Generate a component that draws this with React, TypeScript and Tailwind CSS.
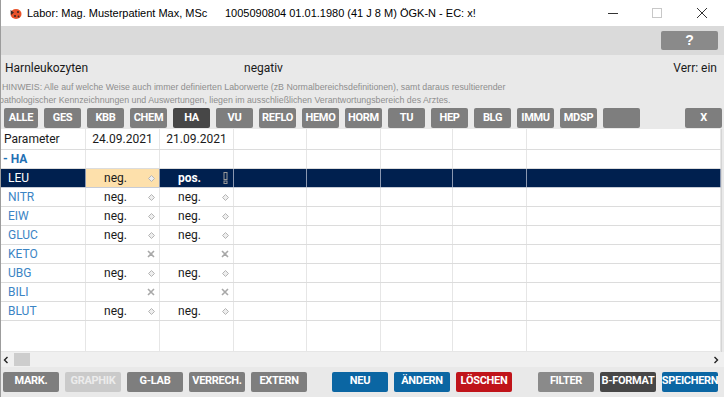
import React from 'react';

const tabs = ['GES', 'KBB', 'CHEM', 'HA', 'VU', 'REFLO', 'HEMO', 'HORM', 'TU', 'HEP', 'BLG', 'IMMU', 'MDSP', ''];

type Mark = 'd' | 'x' | '!';
type Row = { name: string; a?: string; am: Mark; b?: string; bm: Mark; sel?: boolean };

const rows: Row[] = [
  { name: 'LEU', a: 'neg.', am: 'd', b: 'pos.', bm: '!', sel: true },
  { name: 'NITR', a: 'neg.', am: 'd', b: 'neg.', bm: 'd' },
  { name: 'EIW', a: 'neg.', am: 'd', b: 'neg.', bm: 'd' },
  { name: 'GLUC', a: 'neg.', am: 'd', b: 'neg.', bm: 'd' },
  { name: 'KETO', am: 'x', bm: 'x' },
  { name: 'UBG', a: 'neg.', am: 'd', b: 'neg.', bm: 'd' },
  { name: 'BILI', am: 'x', bm: 'x' },
  { name: 'BLUT', a: 'neg.', am: 'd', b: 'neg.', bm: 'd' },
];

const Marker = ({ kind }: { kind: Mark }) => {
  if (kind === 'd')
    return (
      <svg width="7" height="7" viewBox="0 0 7 7" className="absolute right-[4px] top-[6px]">
        <path d="M3.5 0.5 L6.5 3.5 L3.5 6.5 L0.5 3.5 Z" fill="#eeeeee" stroke="#b5b5b5" strokeWidth="1" />
      </svg>
    );
  if (kind === 'x')
    return (
      <svg width="8" height="8" viewBox="0 0 8 8" className="absolute right-[4px] top-[5px]">
        <path d="M1 1 L7 7 M7 1 L1 7" stroke="#a8a8a8" strokeWidth="1.6" />
      </svg>
    );
  return (
    <svg width="5" height="12" viewBox="0 0 5 12" className="absolute right-[5px] top-[3px]">
      <rect x="1" y="0.5" width="3" height="7" fill="none" stroke="#9a9a9a" />
      <rect x="1" y="9" width="3" height="2.5" fill="none" stroke="#9a9a9a" />
    </svg>
  );
};

const emptyCols = ['w-[73px]', 'w-[74px]', 'w-[72px]', 'w-[74px]'];

const EmptyCells = ({ sel }: { sel?: boolean }) => (
  <>
    {emptyCols.map((w, i) => (
      <div key={i} className={`${w} h-full border-r ${sel ? 'border-[#8a97b0]' : 'border-[#e6e6e6]'}`} />
    ))}
    <div className={`flex-1 h-full border-r ${sel ? 'border-[#8a97b0]' : 'border-[#e6e6e6]'}`} />
  </>
);

export default function App() {
  return (
    <div className="w-[724px] h-[397px] overflow-hidden bg-[#e9e9e9] flex flex-col border-l border-[#9c9c9c] font-['Roboto',sans-serif] text-[12px] text-[#1a1a1a]">
      {/* title bar */}
      <div className="h-[26px] bg-white flex items-center font-['Liberation_Sans',sans-serif] text-[11px] text-black whitespace-nowrap shrink-0">
        <svg width="14" height="13" viewBox="0 0 14 13" className="ml-[7px] mr-[5px] shrink-0">
          <ellipse cx="8" cy="7" rx="5.5" ry="5" fill="#e8522a" />
          <path d="M2.5 3 L6 5.5 L3 8 Z" fill="#3a2a26" />
          <circle cx="7" cy="9" r="1.1" fill="#3a2a26" />
          <circle cx="10" cy="5" r="1.1" fill="#3a2a26" />
          <circle cx="10.5" cy="9.5" r="0.9" fill="#3a2a26" />
        </svg>
        <span className="w-[198px] shrink-0">Labor: Mag. Musterpatient Max, MSc</span>
        <span className="w-[175px] shrink-0">1005090804 01.01.1980 (41 J 8 M)</span>
        <span>ÖGK-N - EC: x!</span>
        <div className="ml-auto flex items-center">
          <svg width="12" height="12" viewBox="0 0 12 12" className="mr-[32px]">
            <path d="M1 6.5 H11" stroke="#333" strokeWidth="1" />
          </svg>
          <svg width="12" height="12" viewBox="0 0 12 12" className="mr-[33px]">
            <rect x="1.5" y="1.5" width="9" height="9" fill="none" stroke="#c8c8c8" />
          </svg>
          <svg width="12" height="12" viewBox="0 0 12 12" className="mr-[16px]">
            <path d="M1 1 L11 11 M11 1 L1 11" stroke="#333" strokeWidth="1" />
          </svg>
        </div>
      </div>

      {/* toolbar */}
      <div className="h-[29px] bg-[#dadada] flex items-center justify-end pr-[6px] shrink-0">
        <div className="w-[57px] h-[19px] rounded-[2px] bg-[#8a8a8a] flex items-center justify-center text-white font-bold text-[14px] font-['Liberation_Sans',sans-serif]">
          ?
        </div>
      </div>

      {/* info */}
      <div className="h-[25px] flex items-center px-[4px] shrink-0 text-[12px]">
        <span className="w-[239px]">Harnleukozyten</span>
        <span>negativ</span>
        <span className="ml-auto mr-[3px]">Verr: ein</span>
      </div>
      <div className="h-[28px] font-['Liberation_Sans',sans-serif] text-[8.8px] leading-[12.5px] text-[#8e8e8e] whitespace-nowrap shrink-0 pt-[1px]">
        <div className="ml-[1px]">
          HINWEIS: Alle auf welche Weise auch immer definierten Laborwerte (zB Normalbereichsdefinitionen), samt daraus resultierender
        </div>
        <div className="-ml-[2px]">
          pathologischer Kennzeichnungen und Auswertungen, liegen im ausschließlichen Verantwortungsbereich des Arztes.
        </div>
      </div>

      {/* tabs */}
      <div className="h-[21px] flex items-start gap-[6px] pl-[3px] pr-[2px] shrink-0 text-white font-bold text-[11px] tracking-[-0.3px]">
        <div className="w-[34px] h-[20px] rounded-[2px] bg-[#7e7e7e] flex items-center justify-center">ALLE</div>
        {tabs.map((t, i) => (
          <div
            key={i}
            className={`w-[37px] h-[20px] rounded-[2px] flex items-center justify-center ${t === 'HA' ? 'bg-[#474747]' : 'bg-[#7e7e7e]'}`}
          >
            {t}
          </div>
        ))}
        <div className="ml-auto w-[37px] h-[20px] rounded-[2px] bg-[#7e7e7e] flex items-center justify-center">X</div>
      </div>

      {/* table */}
      <div className="flex-1 bg-white flex flex-col mr-[2px] border-r border-[#d4d4d4]">
        <div className="h-[21px] flex items-center border-b border-[#dcdcdc] shrink-0">
          <div className="w-[85px] h-full flex items-center pl-[3px] border-r border-[#e6e6e6]">Parameter</div>
          <div className="w-[74px] h-full flex items-center justify-center border-r border-[#e6e6e6]">24.09.2021</div>
          <div className="w-[74px] h-full flex items-center justify-center border-r border-[#e6e6e6]">21.09.2021</div>
          <EmptyCells />
        </div>
        <div className="h-[19px] flex items-center border-b border-[#dcdcdc] shrink-0">
          <div className="w-[85px] h-full flex items-center pl-[2px] border-r border-[#e6e6e6] font-bold text-[#1f70b4]">- HA</div>
          <div className="w-[74px] h-full border-r border-[#e6e6e6]" />
          <div className="w-[74px] h-full border-r border-[#e6e6e6]" />
          <EmptyCells />
        </div>
        {rows.map((r) => (
          <div
            key={r.name}
            className={`h-[19px] flex items-center border-b shrink-0 ${r.sel ? 'bg-[#00204f] border-[#c7ccd6] text-white' : 'border-[#dcdcdc]'}`}
          >
            <div className={`w-[85px] h-full flex items-center pl-[7px] border-r ${r.sel ? 'border-[#8a97b0] text-white' : 'border-[#e6e6e6] text-[#3b84c4]'}`}>
              {r.name}
            </div>
            <div className={`relative w-[74px] h-full flex items-center justify-center pr-[14px] border-r ${r.sel ? 'bg-[#fde0ab] text-[#1a1a1a] border-[#8a97b0]' : 'border-[#e6e6e6]'}`}>
              {r.a}
              <Marker kind={r.am} />
            </div>
            <div className={`relative w-[74px] h-full flex items-center justify-center pr-[14px] border-r ${r.sel ? 'font-bold border-[#8a97b0]' : 'border-[#e6e6e6]'}`}>
              {r.b}
              <Marker kind={r.bm} />
            </div>
            <EmptyCells sel={r.sel} />
          </div>
        ))}
        <div className="flex-1 flex border-b border-[#e6e6e6]">
          <div className="w-[85px] h-full border-r border-[#e6e6e6]" />
          <div className="w-[74px] h-full border-r border-[#e6e6e6]" />
          <div className="w-[74px] h-full border-r border-[#e6e6e6]" />
          <EmptyCells />
        </div>
      </div>

      {/* scrollbar */}
      <div className="h-[15px] bg-[#f0f0f0] flex items-center shrink-0 text-[#222]">
        <svg width="6" height="8" viewBox="0 0 6 8" className="ml-[2px]">
          <path d="M4.5 1 L1.5 4 L4.5 7" fill="none" stroke="#222" strokeWidth="1.4" />
        </svg>
        <div className="ml-[5px] w-[16px] h-[13px] bg-[#cdcdcd]" />
        <svg width="6" height="8" viewBox="0 0 6 8" className="ml-auto mr-[5px]">
          <path d="M1.5 1 L4.5 4 L1.5 7" fill="none" stroke="#222" strokeWidth="1.4" />
        </svg>
      </div>

      {/* bottom buttons */}
      <div className="h-[30px] flex items-center pl-[2px] gap-[6px] shrink-0 text-white font-bold text-[11px] tracking-[-0.3px] pb-[1px]">
        <div className="w-[56px] h-[20px] rounded-[2px] bg-[#7e7e7e] flex items-center justify-center">MARK.</div>
        <div className="w-[56px] h-[20px] rounded-[2px] bg-[#cacaca] text-[#ececec] flex items-center justify-center">GRAPHIK</div>
        <div className="w-[56px] h-[20px] rounded-[2px] bg-[#7e7e7e] flex items-center justify-center">G-LAB</div>
        <div className="w-[56px] h-[20px] rounded-[2px] bg-[#7e7e7e] flex items-center justify-center">VERRECH.</div>
        <div className="w-[56px] h-[20px] rounded-[2px] bg-[#7e7e7e] flex items-center justify-center">EXTERN</div>
        <div className="ml-[19px] w-[56px] h-[20px] rounded-[2px] bg-[#0b66a3] flex items-center justify-center">NEU</div>
        <div className="w-[56px] h-[20px] rounded-[2px] bg-[#0b66a3] flex items-center justify-center">ÄNDERN</div>
        <div className="w-[56px] h-[20px] rounded-[2px] bg-[#c0141a] flex items-center justify-center">LÖSCHEN</div>
        <div className="ml-[20px] w-[56px] h-[20px] rounded-[2px] bg-[#8a8a8a] flex items-center justify-center">FILTER</div>
        <div className="w-[56px] h-[20px] rounded-[2px] bg-[#474747] flex items-center justify-center">B-FORMAT</div>
        <div className="w-[56px] h-[20px] rounded-[2px] bg-[#0b66a3] flex items-center justify-center">SPEICHERN</div>
      </div>
    </div>
  );
}
